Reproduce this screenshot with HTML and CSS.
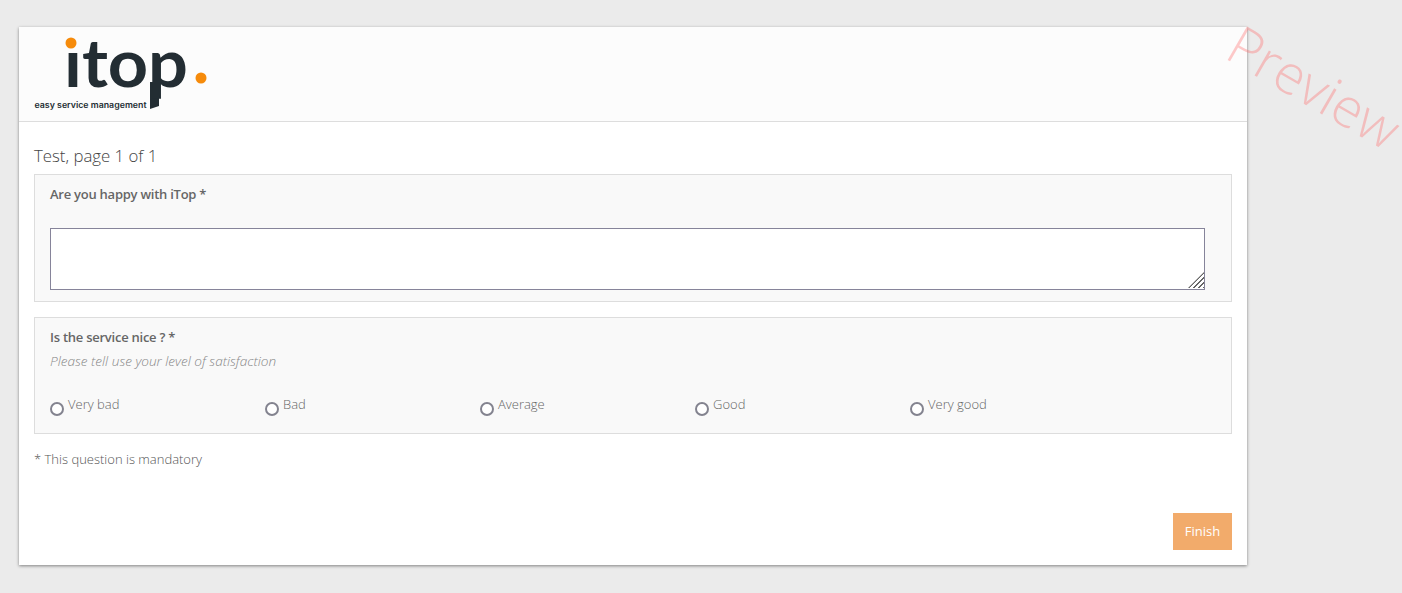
FILE: index.html
```html
<!DOCTYPE html>
<html lang="en">
<head>
<meta charset="utf-8">
<title>Test</title>
<link rel="stylesheet" href="styles.css">
</head>
<body>
<div class="watermark">Preview</div>
<main class="card">
  <header class="card-header">
    <svg class="logo" width="195" height="94" viewBox="0 0 195 94" role="img" aria-label="iTop">
      <circle class="logo-dot" cx="52" cy="16" r="5.5"/>
      <circle class="logo-dot" cx="182" cy="51" r="5.5"/>
      <polygon class="logo-ink" points="131,55 140,55 140,79 131,82"/>
      <text class="logo-word" x="45" y="60" textLength="124" lengthAdjust="spacingAndGlyphs">ıtop</text>
      <text class="logo-tag" x="15.5" y="81" textLength="112" lengthAdjust="spacingAndGlyphs">easy service management</text>
    </svg>
  </header>
  <form class="card-body">
    <h1 class="page-title">Test, page 1 of 1</h1>
    <section class="question question-text">
      <h2 class="question-label">Are you happy with iTop *</h2>
      <div class="answer-wrap">
        <textarea class="answer" aria-label="Are you happy with iTop"></textarea>
      </div>
    </section>
    <section class="question question-radio">
      <h2 class="question-label">Is the service nice ? *</h2>
      <p class="question-help">Please tell use your level of satisfaction</p>
      <div class="choices">
        <label class="choice"><input type="radio" name="nice"><span>Very bad</span></label>
        <label class="choice"><input type="radio" name="nice"><span>Bad</span></label>
        <label class="choice"><input type="radio" name="nice"><span>Average</span></label>
        <label class="choice"><input type="radio" name="nice"><span>Good</span></label>
        <label class="choice"><input type="radio" name="nice"><span>Very good</span></label>
      </div>
    </section>
    <p class="mandatory">* This question is mandatory</p>
    <div class="actions"><button class="finish" type="button">Finish</button></div>
  </form>
</main>
</body>
</html>
```
FILE: styles.css
```css
* { box-sizing: border-box; }
html, body { height: 100%; overflow: hidden; }
body {
  margin: 0;
  padding: 27px 155px 28px 19px;
  background: #ebebeb;
  font-family: "Open Sans", sans-serif;
  font-weight: 300;
  color: #555;
}
.card {
  height: 538px;
  background: #fff;
  box-shadow: 0 1px 3px rgba(0, 0, 0, .45);
  display: flex;
  flex-direction: column;
}
.card-header {
  height: 95px;
  background: #fcfcfc;
  border-bottom: 1px solid #ddd;
  flex: none;
}
.logo { display: block; overflow: visible; }
.logo-dot { fill: #f68b0b; }
.logo-ink { fill: #232d33; }
.logo-word {
  font-family: "Lato", sans-serif;
  font-weight: 700;
  font-size: 66px;
  fill: #232d33;
}
.logo-tag {
  font-family: "Inter", sans-serif;
  font-weight: 600;
  font-size: 8px;
  fill: #232d33;
}
.card-body {
  flex: 1;
  padding: 23px 15px 15px;
  display: flex;
  flex-direction: column;
}
.page-title {
  margin: 0 0 7px;
  font-size: 16.8px;
  line-height: 22px;
  font-weight: 300;
  color: #444;
}
.question {
  background: #f9f9f9;
  border: 1px solid #ddd;
  padding: 10px 26px 0 15px;
}
.question-text { height: 128px; margin-bottom: 15px; }
.question-radio { height: 117px; padding-right: 15px; }
.question-label {
  margin: 0;
  font-size: 13px;
  line-height: 18px;
  font-weight: 600;
  letter-spacing: -.25px;
  color: #666;
}
.question-text .question-label { margin-bottom: 25px; }
.answer-wrap { position: relative; }
.answer-wrap::after {
  content: "";
  position: absolute;
  right: 1px;
  bottom: 2px;
  width: 16px;
  height: 16px;
  background: repeating-linear-gradient(135deg, #666 0 1.4px, transparent 1.4px 3.6px);
  clip-path: polygon(100% 0, 100% 100%, 0 100%);
}
.answer {
  display: block;
  width: 100%;
  height: 62px;
  margin: 0;
  border: 1px solid #86849a;
  border-radius: 0;
  background: #fff;
  outline: none;
  resize: none;
}
.question-help {
  margin: 6px 0 0;
  font-size: 13.6px;
  line-height: 18px;
  font-style: italic;
  color: #888;
}
.choices {
  display: grid;
  grid-template-columns: repeat(5, 215px);
  margin-top: 26px;
}
.choice {
  display: flex;
  align-items: flex-start;
  gap: 4px;
  font-size: 13px;
  line-height: 16px;
  color: #666;
}
.choice input {
  appearance: none;
  width: 14px;
  height: 14px;
  margin: 6px 0 0;
  border: 2px solid #83838f;
  border-radius: 50%;
  background: #fff;
  flex: none;
}
.mandatory {
  margin: 16px 0 0;
  font-size: 13px;
  line-height: 18px;
  color: #555;
}
.actions {
  margin-top: auto;
  display: flex;
  justify-content: flex-end;
}
.finish {
  width: 59px;
  height: 37px;
  border: 0;
  padding: 0 0 1px;
  background: #f2ab6b;
  color: #fff;
  font-family: inherit;
  font-size: 13px;
  font-weight: 400;
}
.watermark {
  position: absolute;
  left: 1221px;
  top: 56px;
  font-size: 54px;
  line-height: 60px;
  font-weight: 300;
  color: rgba(255, 100, 100, .34);
  transform: rotate(30deg);
  pointer-events: none;
  z-index: 2;
}
```
